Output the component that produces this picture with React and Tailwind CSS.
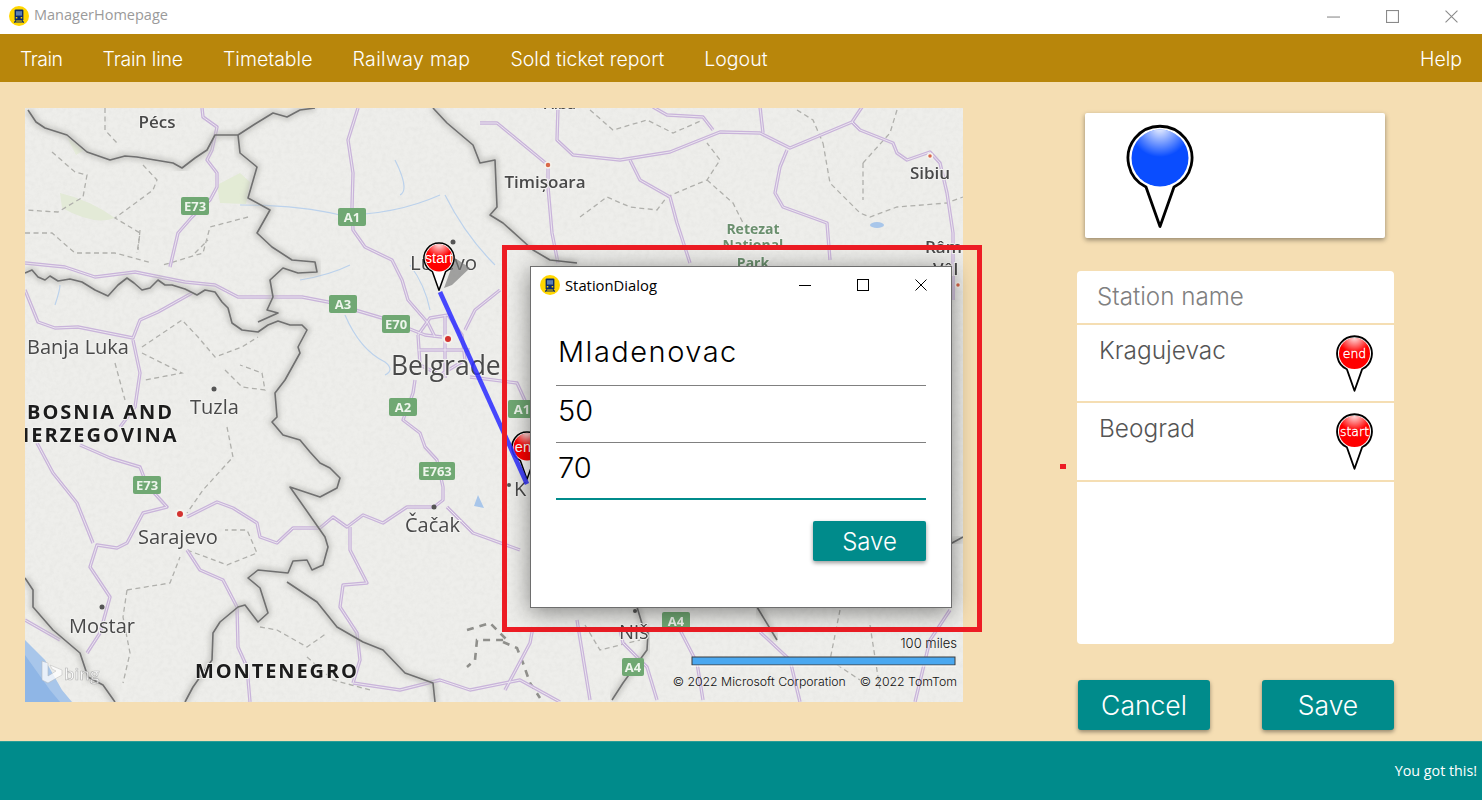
import React from "react";

const borders = [
  "25,273 32,270 38,277 45,280 50,276 58,281 70,279 82,282 95,290 108,296 118,285 127,278 134,283 142,290 150,288 158,280 165,285 172,285 185,289 197,295 205,290 215,292 222,302 228,308 232,323 242,330 258,332 268,325 278,321 290,325 302,325 307,330 298,347 300,353 285,380 275,393 277,417 272,422 283,435 300,440 310,452 320,463 330,468 340,478 337,488 320,497 290,487 325,537 328,547 323,565 312,570 307,560 293,561 288,573 258,570 248,578 260,588 268,613 258,622 245,605 238,607 220,622 213,633 212,660 193,687 185,702",
  "287,582 317,602 337,627 363,642 383,650 405,673 433,683 435,702",
  "25,578 33,590 33,607 53,630 80,653 88,677 103,685 115,702",
  "28,110 36,122 45,128 67,135 87,152 110,160 125,156 137,157 155,160 173,163 182,168 195,158 207,150 215,135 238,135 255,124 273,113 287,117 300,110 315,108",
  "238,135 240,153 257,167 248,198 270,210 257,233 272,247 292,260 315,262 317,272 298,273 283,268 270,280 273,297 267,310 278,313 258,322",
  "433,108 447,123 473,145 480,163 495,160 497,207 490,215 503,223 533,250 550,260 577,263",
  "757,607 777,640",
  "637,607 643,627 648,633 647,650 623,683 612,700",
  "930,538 952,543 963,537",
];

const roads = [
  "202,108 203,117 217,127 212,150 207,160 217,173 217,187 210,200 192,217 178,233 170,267",
  "25,263 65,267 95,277 135,272 185,282 215,285 238,297 302,297 328,302 382,318 425,335 442,337",
  "358,108 348,140 353,173 352,207 353,230 365,247 392,260 402,280 408,300 428,323 435,337",
  "415,380 413,393 403,420 420,433 425,447 437,460 443,487 443,500 434,507 407,507 383,523 363,515 347,527 333,517 320,528 293,528 277,543 260,537 257,523 233,508 217,502 187,517",
  "447,507 473,533 520,550",
  "350,527 350,550 367,583 343,585 340,607 357,633 360,660 353,683",
  "80,445 110,458 140,467 147,485 167,507 143,513 127,543 117,548 97,545 90,567 110,597 100,633 87,653",
  "37,443 53,473 77,503 93,543",
  "187,550 200,570 223,580 237,607 238,647 247,667 250,702",
  "25,620 60,640",
  "25,290 38,322 55,328 78,327 108,333 133,338 140,320 158,312 192,293",
  "133,340 140,373 135,407 120,427",
  "480,123 497,123 548,165 548,187 552,233 558,263",
  "558,107 557,140 573,155 620,160 670,152 720,132 760,133 790,148 852,122 862,107",
  "852,122 860,130 893,143 897,153 907,160 930,152 940,163 947,193 953,233 953,300",
  "787,150 780,167 775,193 783,207 827,223 830,260",
  "630,160 640,180 670,197 677,223 690,263",
  "760,107 763,133",
  "653,107 667,115 703,117 713,130",
  "470,377 517,383 527,405",
  "418,335 430,318 448,315 462,335 465,360 440,375 420,365 418,335",
  "418,350 470,350",
  "445,315 445,378",
  "500,290 475,310 465,330",
  "533,627 530,643 505,690",
  "577,620 590,700",
  "620,630 623,643 647,667 657,700",
  "680,630 697,663 703,700",
  "760,632 790,660 800,702",
  "950,610 930,640 915,702",
  "353,683 400,690 440,680 470,690 520,680 560,702",
];

const dashes = [
  "105,108 105,130 117,143",
  "52,152 75,172 87,175 83,197 58,212 25,210",
  "143,165 157,180 153,190 115,218 140,233 137,253",
  "248,217 210,227 203,253 163,265",
  "580,217 607,197 630,207 657,210 667,197 690,187 707,180 720,160 707,143",
  "707,180 733,203 743,223",
  "823,143 830,183 860,213 870,217 897,207 947,203 963,197",
  "863,163 863,200",
  "590,110 613,130 647,120 673,133 703,120",
  "797,110 813,120 823,143",
  "897,110 890,133 863,163",
  "142,347 182,320 198,337 215,357 242,347 258,337",
  "142,353 182,373 145,380",
  "225,370 242,387 265,390 262,373 240,365",
  "115,363 125,400",
  "25,233 52,233 75,253 115,253 152,263",
  "140,230 138,250",
  "195,253 208,240",
  "227,427 233,457 203,490 187,513",
  "127,590 170,583 180,557",
  "127,590 123,617 130,653 123,683",
  "187,550 227,565 257,553 247,530 225,530",
  "260,627 277,630 307,647 327,633",
  "307,657 333,680 370,690",
  "585,625 600,650 640,640",
  "840,610 830,660 860,680",
  "870,625 880,690",
];

const shields = [
  ["E73", 195, 206, 28],
  ["A1", 352, 217, 28],
  ["A3", 343, 304, 28],
  ["E70", 396, 324, 28],
  ["A1", 522, 409, 28],
  ["A2", 403, 407, 28],
  ["E763", 437, 471, 36],
  ["E73", 147, 485, 28],
  ["A4", 676, 621, 28],
  ["A4", 633, 667, 22],
];

function Sign({ label, x, y, w }) {
  return (
    <g>
      <rect x={x - w / 2} y={y - 9} width={w} height="18" rx="2" fill="#6fa873" />
      <text x={x} y={y + 5} textAnchor="middle" fontSize="13" fontWeight="700" fill="#eef5ec" fontFamily="'Open Sans', sans-serif">{label}</text>
    </g>
  );
}

function MapLabel({ x, y, size = 20, fill = "#484848", weight = 500, spacing = 0, anchor = "start", children }) {
  return (
    <text x={x} y={y} fontSize={size} fill={fill} fontWeight={weight} letterSpacing={spacing} textAnchor={anchor} fontFamily="'Open Sans', sans-serif" stroke="#f2f2f0" strokeWidth="2" paintOrder="stroke">
      {children}
    </text>
  );
}

function Pin({ id, color, label, width, fontSize, labelY, strokeWidth = 2.6, mono, x, y }) {
  const height = (width * 104) / 68;
  return (
    <svg x={x} y={y} width={width} height={height} viewBox="0 0 68 104" className="block">
      <defs>
        <radialGradient id={`${id}-shine`} gradientUnits="userSpaceOnUse" cx="34" cy="3" r="30">
          <stop offset="0" stopColor="#ffffff" stopOpacity="0.95" />
          <stop offset="1" stopColor="#ffffff" stopOpacity="0" />
        </radialGradient>
        <clipPath id={`${id}-clip`}><circle cx="34" cy="34" r="28.5" /></clipPath>
      </defs>
      <path d="M20 63 A32 32 0 1 1 48 63 L34 102.5 Z" fill="#ffffff" stroke="#000000" strokeWidth={strokeWidth} strokeLinejoin="round" />
      <circle cx="34" cy="34" r="28.5" fill={color} />
      <circle cx="34" cy="34" r="28.5" fill={`url(#${id}-shine)`} />
      {label ? (
        <g clipPath={`url(#${id}-clip)`}>
          <text x="34" y={labelY} textAnchor="middle" fontSize={fontSize} fill="#ffffff" stroke={mono ? "#ffffff" : "none"} strokeWidth={mono ? 0.6 : 0} fontFamily={mono ? "'DejaVu Sans', sans-serif" : "'Liberation Sans', sans-serif"}>{label}</text>
        </g>
      ) : null}
    </svg>
  );
}

function AppIcon({ size = 20 }) {
  return (
    <svg width={size} height={size} viewBox="0 0 20 20" className="block shrink-0">
      <circle cx="10" cy="10" r="10" fill="#ffd600" />
      <rect x="5.6" y="3.4" width="8.8" height="11" rx="1.2" fill="#0b2a6b" />
      <rect x="7" y="5.2" width="6" height="4.4" fill="#5b7fb5" />
      <rect x="6.8" y="11" width="1.5" height="1.5" fill="#ffd600" />
      <rect x="11.7" y="11" width="1.5" height="1.5" fill="#ffd600" />
      <path d="M7 14.4 L5.2 16.6 M13 14.4 L14.8 16.6 M5.8 16 H14.2" stroke="#0b2a6b" strokeWidth="1.1" fill="none" />
    </svg>
  );
}

function WinControls({ color, gap, boxSize }) {
  return (
    <div className="flex items-center" style={{ gap }}>
      <svg width={boxSize} height={boxSize} viewBox="0 0 12 12" className="block">
        <path d="M0 6.5 H12" stroke={color} strokeWidth="1" />
      </svg>
      <svg width={boxSize} height={boxSize} viewBox="0 0 12 12" className="block">
        <rect x="0.5" y="0.5" width="11" height="11" fill="none" stroke={color} strokeWidth="1" />
      </svg>
      <svg width={boxSize} height={boxSize} viewBox="0 0 12 12" className="block">
        <path d="M0.5 0.5 L11.5 11.5 M11.5 0.5 L0.5 11.5" stroke={color} strokeWidth="1" />
      </svg>
    </div>
  );
}

function MapView() {
  return (
    <svg viewBox="25 108 938 594" width="938" height="594" className="block shrink-0">
      <defs>
        <filter id="halo" x="-5%" y="-5%" width="110%" height="110%"><feGaussianBlur stdDeviation="2.6" /></filter>
        <filter id="soft" x="-2%" y="-2%" width="104%" height="104%"><feGaussianBlur stdDeviation="0.45" /></filter>
        <filter id="grain" x="0" y="0" width="100%" height="100%">
          <feTurbulence type="fractalNoise" baseFrequency="0.22" numOctaves="3" seed="4" />
          <feColorMatrix values="0 0 0 0 0.45 0 0 0 0 0.45 0 0 0 0 0.43 0.7 0.7 0 0 -0.55" />
        </filter>
        <clipPath id="mapclip"><rect x="25" y="108" width="938" height="594" /></clipPath>
      </defs>
      <g clipPath="url(#mapclip)">
        <rect x="25" y="108" width="938" height="594" fill="#eeeeeb" />
        <rect x="25" y="108" width="938" height="594" filter="url(#grain)" opacity="0.16" />
        <g filter="url(#soft)">
          <path d="M25 640 L45 660 L62 690 L72 702 L25 702 Z" fill="#a8c6ea" />
          <path d="M25 655 L50 690 L60 702 L25 702 Z" fill="#8fb6e6" />
          <path d="M60 193 Q90 200 115 218 Q95 226 62 208 Z" fill="#e3ead7" />
          <path d="M217 185 L240 173 L250 182 L246 204 L220 203 Z" fill="#e3ebd5" />
          <path d="M67 137 L84 150 L76 155 Z" fill="#e6ecda" />
          <path d="M240 205 Q300 205 340 215 Q395 215 440 195 M395 160 Q410 190 400 195 M445 195 Q465 235 495 265 M300 280 Q330 275 350 265 M345 315 Q360 350 385 362 Q395 370 385 375 M410 265 Q425 285 430 310 M55 305 Q60 290 60 285" fill="none" stroke="#bcd2ec" strokeWidth="1.2" />
          <path d="M478 495 L484 508 L474 506 Z" fill="#a8c6ea" />
          <ellipse cx="877" cy="225" rx="7" ry="3" fill="#a8c6ea" />
          {dashes.map((p, i) => (
            <polyline key={i} points={p} fill="none" stroke="#b0b0ac" strokeWidth="1.3" strokeDasharray="5 3.5" />
          ))}
          <polyline points="467,630 490,623 507,640 477,640 475,660 467,667" fill="none" stroke="#8f8f8b" strokeWidth="2.6" strokeDasharray="7 6" />
          <polyline points="503,642 517,648 523,663 530,683 540,698" fill="none" stroke="#8f8f8b" strokeWidth="2.6" strokeDasharray="7 6" />
          {roads.map((p, i) => (
            <polyline key={`a${i}`} points={p} fill="none" stroke="#c9b4da" strokeWidth="3.4" strokeLinejoin="round" />
          ))}
          {roads.map((p, i) => (
            <polyline key={`b${i}`} points={p} fill="none" stroke="#ebe6ef" strokeWidth="1" strokeLinejoin="round" />
          ))}
          {borders.map((p, i) => (
            <polyline key={`h${i}`} points={p} fill="none" stroke="#b4b4b0" strokeOpacity="0.6" strokeWidth="7" strokeLinejoin="round" filter="url(#halo)" />
          ))}
          {borders.map((p, i) => (
            <polyline key={`c${i}`} points={p} fill="none" stroke="#707070" strokeWidth="1.6" strokeLinejoin="round" />
          ))}
          {shields.map(([label, x, y, w], i) => (
            <Sign key={i} label={label} x={x} y={y} w={w} />
          ))}
          <circle cx="180" cy="514" r="4" fill="#d3302f" stroke="#f5f3ee" strokeWidth="2" />
          <circle cx="448" cy="339" r="4" fill="#d3302f" stroke="#f5f3ee" strokeWidth="2" />
          <circle cx="548" cy="165" r="3" fill="#d9674a" stroke="#f5f3ee" strokeWidth="1.5" />
          <circle cx="930" cy="156" r="2.5" fill="#d9674a" stroke="#f5f3ee" strokeWidth="1.5" />
          <circle cx="958" cy="285" r="2.5" fill="#d9674a" stroke="#f5f3ee" strokeWidth="1.5" />
          <circle cx="453" cy="242" r="2.5" fill="#555" />
          <circle cx="214" cy="389" r="2.5" fill="#555" />
          <circle cx="102" cy="607" r="2.5" fill="#555" />
          <circle cx="434" cy="507" r="2.5" fill="#555" />
          <circle cx="509" cy="485" r="2" fill="#555" />
          <circle cx="635" cy="611" r="2" fill="#555" />
          <MapLabel x="157" y="128" size="17" weight={600} anchor="middle">Pécs</MapLabel>
          <MapLabel x="545" y="188" size="17" weight={600} anchor="middle">Timișoara</MapLabel>
          <MapLabel x="930" y="179" size="17" weight={600} anchor="middle">Sibiu</MapLabel>
          <MapLabel x="753" y="234" size="14" fill="#6b8f6e" weight={700} anchor="middle">Retezat</MapLabel>
          <MapLabel x="753" y="250" size="14" fill="#6b8f6e" weight={700} anchor="middle">National</MapLabel>
          <MapLabel x="753" y="268" size="14" fill="#6b8f6e" weight={700} anchor="middle">Park</MapLabel>
          <MapLabel x="925" y="253" size="17" weight={600}>Râm</MapLabel>
          <MapLabel x="933" y="275" size="17" weight={600}>Vâl</MapLabel>
          <MapLabel x="560" y="109" size="15" weight={600} anchor="middle">Alba</MapLabel>
          <MapLabel x="410" y="270" size="20.5">Lučevo</MapLabel>
          <MapLabel x="27" y="354" size="20">Banja Luka</MapLabel>
          <MapLabel x="27" y="419" size="20" fill="#1c1c1c" weight={700} spacing="2">BOSNIA AND</MapLabel>
          <MapLabel x="14" y="442" size="20" fill="#1c1c1c" weight={700} spacing="2">HERZEGOVINA</MapLabel>
          <MapLabel x="190" y="414" size="20">Tuzla</MapLabel>
          <MapLabel x="391" y="375" size="26.5">Belgrade</MapLabel>
          <MapLabel x="405" y="532" size="20">Čačak</MapLabel>
          <MapLabel x="138" y="544" size="20">Sarajevo</MapLabel>
          <MapLabel x="69" y="633" size="20">Mostar</MapLabel>
          <MapLabel x="195" y="678" size="20" fill="#1c1c1c" weight={700} spacing="1.9">MONTENEGRO</MapLabel>
          <MapLabel x="619" y="639" size="20">Niš</MapLabel>
          <MapLabel x="514" y="496" size="20">K</MapLabel>
          <g opacity="0.75">
            <path d="M42 661 L48 663 V676 L56 671 L52 669 L50 665 L62 670 V675 L48 683 L42 680 Z" fill="#ffffff" stroke="#b5b5b5" strokeWidth="0.6" />
            <text x="64" y="680" fontSize="17" fill="#ffffff" stroke="#a8a8a8" strokeWidth="0.7" fontFamily="'Open Sans', sans-serif" fontWeight="600">bing</text>
          </g>
        </g>
        <path d="M455 258 L470 268 L452 285 L444 288 Z" fill="#777" opacity="0.65" filter="url(#soft)" />
        <Pin id="mapstart" x={423} y={242} color="#ff0000" label="start" width={32} fontSize={31} labelY={44} strokeWidth={3.2} />
        <Pin id="mapend" x={511} y={431} color="#ff0000" label="end" width={32} fontSize={31} labelY={44} strokeWidth={3.2} />
        <line x1="440" y1="292" x2="527" y2="484" stroke="#3030ff" strokeOpacity="0.88" strokeWidth="4.6" />
        <text x="957" y="648" textAnchor="end" fontSize="13" fill="#111" fontFamily="Inter, sans-serif" fontWeight="300">100 miles</text>
        <rect x="692" y="657" width="263" height="8" fill="#4aa8f0" stroke="#3d3d3d" strokeWidth="1" />
        <path d="M691 666 H956" stroke="#ffffff" strokeWidth="1" />
        <text x="957" y="686" textAnchor="end" fontSize="12.3" fill="#111" fontFamily="Inter, sans-serif" fontWeight="300" xmlSpace="preserve">© 2022 Microsoft Corporation    © 2022 TomTom</text>
      </g>
    </svg>
  );
}

export default function App() {
  const gothic = "font-['Inter',sans-serif] font-light";
  return (
    <div className={`relative flex h-[800px] w-full flex-col overflow-hidden bg-[#f5deb3] ${gothic}`}>
      <div className="flex h-[34px] shrink-0 items-center justify-between bg-white pr-[24px] pb-[2px] pl-[9px]">
        <div className="flex items-center gap-[5px]">
          <AppIcon />
          <span className="pb-[2px] font-['Open_Sans',sans-serif] text-[14.5px] font-normal text-[#9a9a9a]">ManagerHomepage</span>
        </div>
        <WinControls color="#8a8a8a" gap="46px" boxSize="13px" />
      </div>

      <div className="flex h-[48px] shrink-0 items-center justify-between bg-[#b8860b] px-[20px] pt-[3px] text-[19.5px] text-white">
        <div className="flex items-center gap-[40px]">
          <span className="tracking-[-0.5px]">Train</span>
          <span className="tracking-[-0.2px]">Train line</span>
          <span>Timetable</span>
          <span className="tracking-[0.35px]">Railway map</span>
          <span>Sold ticket report</span>
          <span>Logout</span>
        </div>
        <span>Help</span>
      </div>

      <div className="flex min-h-0 flex-1 items-start pt-[26px] pl-[25px]">
        <MapView />
        <div className="ml-[114px] flex w-[317px] shrink-0 flex-col">
          <div className="mt-[5px] ml-[8px] flex h-[125px] w-[300px] items-start rounded-[2px] bg-white pt-[11px] pl-[41px] shadow-[0_2px_5px_rgba(0,0,0,0.4)]">
            <Pin id="big" color="#0a4dff" width={68} strokeWidth={2.8} />
          </div>
          <div className="mt-[33px] flex h-[373px] flex-col rounded-[4px] bg-white">
            <div className="flex h-[54px] shrink-0 items-center border-b-2 border-[#f5deb3] pt-[1px] pl-[20px] text-[24.2px] text-[#808080]">Station name</div>
            <div className="flex h-[78px] shrink-0 items-start justify-between border-b-2 border-[#f5deb3] pt-[9px] pr-[21px] pl-[22px] text-[24.4px] text-[#555555]">
              <span className="leading-[32px]">Kragujevac</span>
              <div className="pt-[1px]"><Pin id="end" color="#ff0000" label="end" width={37} fontSize={23} labelY={42} strokeWidth={3.4} mono /></div>
            </div>
            <div className="flex h-[79px] shrink-0 items-start justify-between border-b-2 border-[#f5deb3] pt-[9px] pr-[21px] pl-[22px] text-[24.4px] text-[#555555]">
              <span className="leading-[32px]">Beograd</span>
              <div className="pt-[1px]"><Pin id="start" color="#ff0000" label="start" width={37} fontSize={23} labelY={42} strokeWidth={3.4} mono /></div>
            </div>
          </div>
          <div className="mt-[36px] flex w-[317px] justify-between pl-[1px]">
            <button className="flex h-[50px] w-[132px] items-center justify-center rounded-[3px] bg-[#008b8b] pt-[1px] text-[26.5px] font-light text-white shadow-[0_2px_4px_rgba(0,0,0,0.4)]">Cancel</button>
            <button className="flex h-[50px] w-[132px] items-center justify-center rounded-[3px] bg-[#008b8b] pt-[1px] text-[26.5px] font-light text-white shadow-[0_2px_4px_rgba(0,0,0,0.4)]">Save</button>
          </div>
        </div>
      </div>

      <div className="flex h-[59px] shrink-0 items-center justify-end border-t border-[#2a9d97] bg-[#008b8b] pr-[5px] pb-[1px] font-['Open_Sans',sans-serif] text-[14.3px] font-normal text-white">
        You got this!
      </div>

      <div className="absolute top-[464px] left-[1060px] h-[5px] w-[6px] bg-[#ed1c24]" />

      <div className="absolute top-[245px] left-[502px] h-[387px] w-[480px] border-[5px] border-[#ed1c24]">
        <div className="absolute top-[16px] left-[23px] flex h-[342px] w-[422px] flex-col border border-[#6e6e6e] bg-white shadow-[0_4px_22px_rgba(0,0,0,0.45)]">
          <div className="flex h-[38px] shrink-0 items-center justify-between pr-[24px] pb-[2px] pl-[9px]">
            <div className="flex items-center gap-[5px]">
              <AppIcon />
              <span className="font-['Open_Sans',sans-serif] text-[14.8px] font-normal text-black">StationDialog</span>
            </div>
            <WinControls color="#000000" gap="46px" boxSize="12px" />
          </div>
          <div className="mx-[25px] flex flex-col">
            <div className="flex h-[81px] items-center border-b-[1.5px] border-[#808080] pt-[13px] pl-[2px] text-[29px] tracking-[1.5px] text-black">Mladenovac</div>
            <div className="flex h-[57px] items-center border-b-[1.5px] border-[#808080] pb-[7px] pl-[2px] text-[29px] text-black">50</div>
            <div className="flex h-[57px] items-center border-b-2 border-[#008b8b] pb-[6px] pl-[2px] text-[29px] text-black">70</div>
            <div className="mt-[21px] flex justify-end">
              <button className="flex h-[40px] w-[113px] items-center justify-center rounded-[2px] bg-[#008b8b] pt-[2px] text-[24px] font-light text-white shadow-[0_2px_4px_rgba(0,0,0,0.4)]">Save</button>
            </div>
          </div>
        </div>
      </div>
    </div>
  );
}
